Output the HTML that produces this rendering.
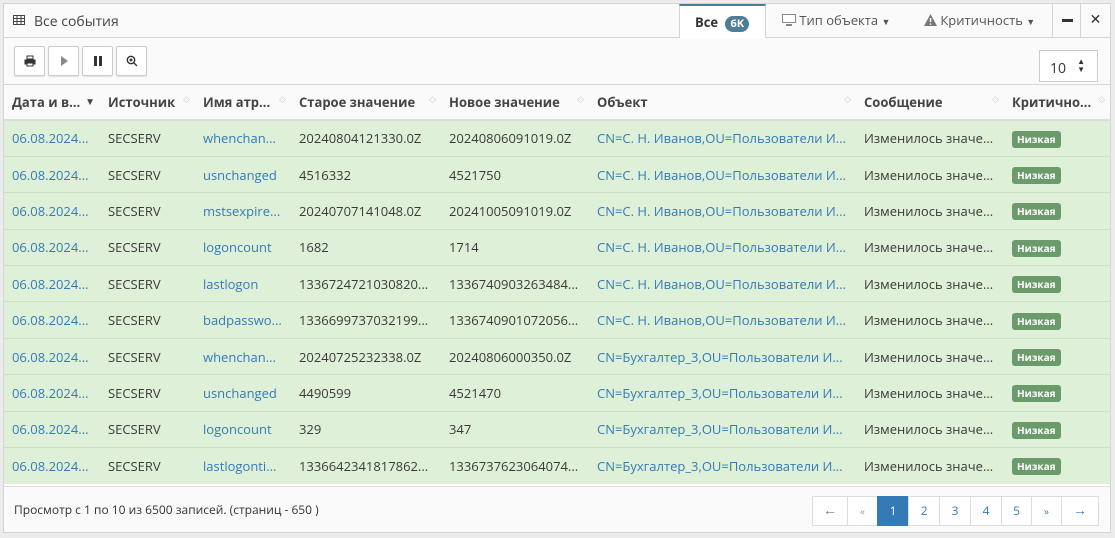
<!DOCTYPE html>
<html><head><meta charset="utf-8"><style>
*{box-sizing:border-box;margin:0;padding:0}
body{width:1115px;height:538px;background:#ececec;font-family:"Open Sans","Liberation Sans","DejaVu Sans",sans-serif;font-size:13px;color:#333;position:relative;overflow:hidden}
.panel{position:absolute;left:3px;top:3px;width:1108px;height:530px;background:#fff;border:1px solid #d5d5d5}
.hdr{position:absolute;left:0;top:0;width:100%;height:34px;background:#fafafa;border-bottom:1px solid #d5d5d5}
.hdr .title{position:absolute;left:8px;top:8px;font-size:14px;color:#444}
.tab{position:absolute;top:0;height:34px;font-size:13px;color:#555;line-height:32px}
.tb{position:absolute;left:0;top:34px;width:100%;height:47px;border-bottom:1px solid #d5d5d5;background:#fafafa}
.btn{position:absolute;top:8px;width:31px;height:30px;border:1px solid #ccc;background:#fff;border-radius:2px;box-shadow:0 1px 1px rgba(0,0,0,.1)}
.btn svg{position:absolute;left:9px;top:8px}
table{position:absolute;left:0;top:81px;border-collapse:collapse;table-layout:fixed;width:1106px}
th{height:35px;text-align:left;font-weight:bold;font-size:13px;color:#444;padding:0 8px;white-space:nowrap;overflow:hidden;position:relative;border-bottom:2px solid #ddd;background:#fafafa}
td{height:36.4px;padding:0 8px;white-space:nowrap;overflow:hidden;text-overflow:ellipsis;background:#dff0d8;border-top:1px solid #d0dec8;color:#393939}
a{color:#337ab7;text-decoration:none}
.s{position:absolute;right:5px;top:10px;color:#ccc;font-size:9px;line-height:7px}
.lbl{display:inline-block;background:#6b9b6b;color:#fff;font-weight:bold;font-size:10px;padding:2px 5px;border-radius:3px;line-height:13px}
.ft{position:absolute;left:0;top:482px;width:100%;height:46px;background:#fafafa;border-top:1px solid #ddd}
.pg{position:absolute;top:9px;height:30px;border:1px solid #ddd;background:#fff;color:#337ab7;text-align:center;line-height:28px;font-size:12px}
</style></head><body>
<div class="panel">
 <div class="hdr">
  <svg style="position:absolute;left:9px;top:11px" width="12" height="10" viewBox="0 0 12 10"><rect x=".5" y=".5" width="11" height="9" fill="none" stroke="#444"/><path d="M0 3.5H12M0 6.5H12M4 0V10M8 0V10" stroke="#444"/></svg>
  <div class="title" style="left:30px">Все события</div>
  <div class="tab" style="left:675px;width:87px;background:#fff;border-top:2px solid #4f7d96;border-left:1px solid #d5d5d5;border-right:1px solid #d5d5d5;height:35px;font-weight:bold;color:#333;padding-left:15px">Все <span style="display:inline-block;background:#4f7d96;color:#fff;border-radius:9px;font-size:11px;line-height:16px;padding:0 5px;margin-left:4px">6K</span></div>
  <div class="tab" style="left:778px"><svg width="14" height="12" viewBox="0 0 14 12" style="vertical-align:-1px"><rect x="0" y="0" width="14" height="9" fill="#888"/><rect x="1" y="1" width="12" height="7" fill="#fff"/><rect x="4" y="10" width="6" height="2" fill="#888"/></svg> Тип объекта <span style="font-size:9px">▼</span></div>
  <div class="tab" style="left:920px"><svg width="13" height="12" viewBox="0 0 13 12" style="vertical-align:-1px"><path d="M6.5 0L13 12H0Z" fill="#777"/><path d="M6.5 4V8M6.5 9.5V10.8" stroke="#fff" stroke-width="1.5"/></svg> Критичность <span style="font-size:9px">▼</span></div>
  <div class="tab" style="left:1048px;width:28px;border-left:1px solid #d5d5d5"><div style="position:absolute;left:9px;top:15px;width:11px;height:3px;background:#333"></div></div>
  <div class="tab" style="left:1076px;width:30px;border-left:1px solid #d5d5d5;text-align:center;font-weight:bold;font-size:14px;color:#333">✕</div>
 </div>
 <div class="tb">
  <div class="btn" style="left:10px"><svg width="12" height="12" viewBox="0 0 12 12"><rect x="3" y="1" width="6" height="3" fill="none" stroke="#333"/><rect x="0.5" y="4.5" width="11" height="5" fill="#333"/><rect x="3" y="8" width="6" height="3" fill="#fff" stroke="#333"/></svg></div>
  <div class="btn" style="left:44px"><svg width="12" height="12" viewBox="0 0 12 12"><path d="M3 1L10 6L3 11Z" fill="#888"/></svg></div>
  <div class="btn" style="left:78px"><svg width="12" height="12" viewBox="0 0 12 12"><rect x="2" y="1" width="3" height="10" fill="#333"/><rect x="7" y="1" width="3" height="10" fill="#333"/></svg></div>
  <div class="btn" style="left:112px"><svg width="12" height="12" viewBox="0 0 12 12"><circle cx="5" cy="5" r="3.7" fill="none" stroke="#333" stroke-width="1.4"/><path d="M7.5 7.5L11 11M3.5 5H6.5M5 3.5V6.5" stroke="#333" stroke-width="1.4"/></svg></div>
  <div style="position:absolute;left:1035px;top:12px;width:59px;height:32px;border:1px solid #ccc;background:#fff;padding:8px 0 0 10px;font-size:14px">10 <span style="position:absolute;right:12px;top:7px;font-size:8px;line-height:8px">▲<br>▼</span></div>
 </div>
 <table>
 <colgroup><col style="width:96px"><col style="width:95px"><col style="width:96px"><col style="width:150px"><col style="width:148px"><col style="width:267px"><col style="width:148px"><col style="width:106px"></colgroup>
 <tr><th>Дата и в... <span class="s" style="color:#444;font-size:10px;top:13px">▼</span></th><th>Источник<span class="s">◇</span></th><th>Имя атр...<span class="s">◇</span></th><th>Старое значение<span class="s">◇</span></th><th>Новое значение<span class="s">◇</span></th><th>Объект<span class="s">◇</span></th><th>Сообщение<span class="s">◇</span></th><th>Критично...<span class="s">◇</span></th></tr>
 <tr><td><a>06.08.2024...</a></td><td>SECSERV</td><td><a>whenchan...</a></td><td>20240804121330.0Z</td><td>20240806091019.0Z</td><td><a>CN=С. Н. Иванов,OU=Пользователи И...</a></td><td>Изменилось значе...</td><td><span class="lbl">Низкая</span></td></tr>
 <tr><td><a>06.08.2024...</a></td><td>SECSERV</td><td><a>usnchanged</a></td><td>4516332</td><td>4521750</td><td><a>CN=С. Н. Иванов,OU=Пользователи И...</a></td><td>Изменилось значе...</td><td><span class="lbl">Низкая</span></td></tr>
 <tr><td><a>06.08.2024...</a></td><td>SECSERV</td><td><a>mstsexpire...</a></td><td>20240707141048.0Z</td><td>20241005091019.0Z</td><td><a>CN=С. Н. Иванов,OU=Пользователи И...</a></td><td>Изменилось значе...</td><td><span class="lbl">Низкая</span></td></tr>
 <tr><td><a>06.08.2024...</a></td><td>SECSERV</td><td><a>logoncount</a></td><td>1682</td><td>1714</td><td><a>CN=С. Н. Иванов,OU=Пользователи И...</a></td><td>Изменилось значе...</td><td><span class="lbl">Низкая</span></td></tr>
 <tr><td><a>06.08.2024...</a></td><td>SECSERV</td><td><a>lastlogon</a></td><td>1336724721030820...</td><td>1336740903263484...</td><td><a>CN=С. Н. Иванов,OU=Пользователи И...</a></td><td>Изменилось значе...</td><td><span class="lbl">Низкая</span></td></tr>
 <tr><td><a>06.08.2024...</a></td><td>SECSERV</td><td><a>badpasswo...</a></td><td>1336699737032199...</td><td>1336740901072056...</td><td><a>CN=С. Н. Иванов,OU=Пользователи И...</a></td><td>Изменилось значе...</td><td><span class="lbl">Низкая</span></td></tr>
 <tr><td><a>06.08.2024...</a></td><td>SECSERV</td><td><a>whenchan...</a></td><td>20240725232338.0Z</td><td>20240806000350.0Z</td><td><a>CN=Бухгалтер_3,OU=Пользователи И...</a></td><td>Изменилось значе...</td><td><span class="lbl">Низкая</span></td></tr>
 <tr><td><a>06.08.2024...</a></td><td>SECSERV</td><td><a>usnchanged</a></td><td>4490599</td><td>4521470</td><td><a>CN=Бухгалтер_3,OU=Пользователи И...</a></td><td>Изменилось значе...</td><td><span class="lbl">Низкая</span></td></tr>
 <tr><td><a>06.08.2024...</a></td><td>SECSERV</td><td><a>logoncount</a></td><td>329</td><td>347</td><td><a>CN=Бухгалтер_3,OU=Пользователи И...</a></td><td>Изменилось значе...</td><td><span class="lbl">Низкая</span></td></tr>
 <tr><td><a>06.08.2024...</a></td><td>SECSERV</td><td><a>lastlogonti...</a></td><td>1336642341817862...</td><td>1336737623064074...</td><td><a>CN=Бухгалтер_3,OU=Пользователи И...</a></td><td>Изменилось значе...</td><td><span class="lbl">Низкая</span></td></tr>
 </table>
 <div class="ft">
  <div style="position:absolute;left:10px;top:14px;font-size:12px;color:#333">Просмотр с 1 по 10 из 6500 записей. (страниц - 650 )</div>
  <div class="pg" style="left:808px;width:36px;color:#777;font-size:14px">←</div>
  <div class="pg" style="left:843px;width:31px;color:#999;font-size:10px">«</div>
  <div class="pg" style="left:873px;width:32px;background:#337ab7;border-color:#337ab7;color:#fff">1</div>
  <div class="pg" style="left:904px;width:32px">2</div>
  <div class="pg" style="left:935px;width:32px">3</div>
  <div class="pg" style="left:966px;width:32px">4</div>
  <div class="pg" style="left:997px;width:31px">5</div>
  <div class="pg" style="left:1027px;width:31px;font-size:10px">»</div>
  <div class="pg" style="left:1057px;width:38px;font-size:14px">→</div>
 </div>
</div>
</body></html>
